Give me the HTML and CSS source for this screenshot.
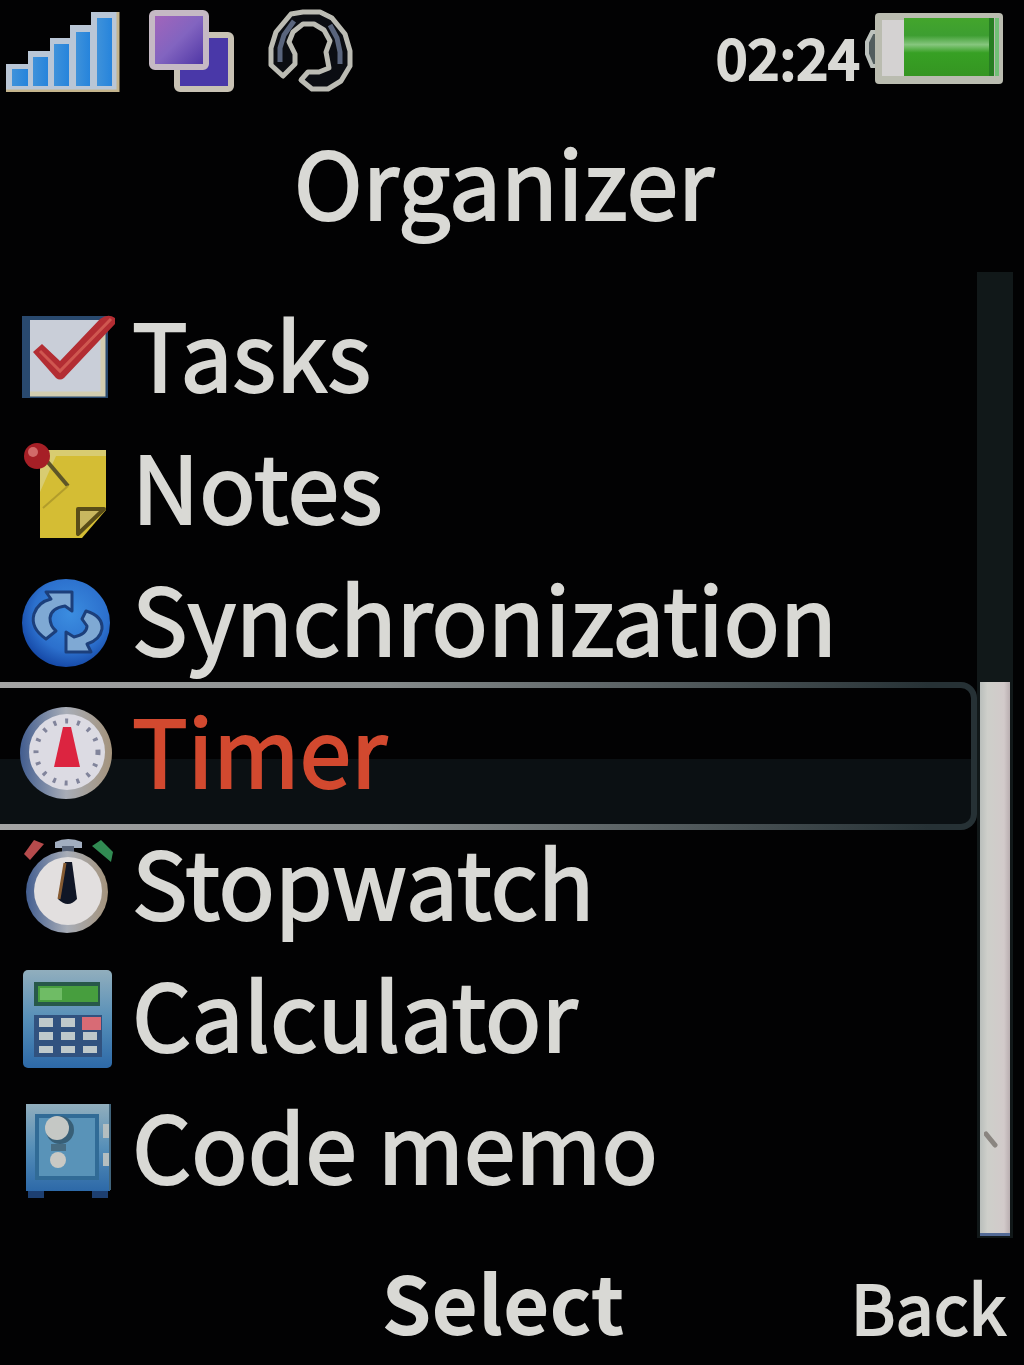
FILE: index.html
```html
<!DOCTYPE html>
<html lang="en">
<head>
<meta charset="utf-8">
<meta name="viewport" content="width=device-width, initial-scale=1">
<title>Organizer</title>
<link rel="stylesheet" href="styles.css">
</head>
<body>
<div class="phone">
  <header class="status">
    <div class="status-group">
      <svg width="120" height="84" viewBox="0 0 120 84" role="img" aria-label="Signal strength">
        <defs>
          <linearGradient id="bar" x1="0" x2="1" y1="0" y2="0"><stop offset="0" stop-color="#3f92da"/><stop offset="1" stop-color="#2684dc"/></linearGradient>
        </defs>
        <path d="M6 56H28V43H50V30H70V17H91V4H118V83H6Z" fill="#b9c6d6"/>
        <path d="M118 4V83H6" fill="none" stroke="#c4b48c" stroke-width="3"/>
        <g fill="url(#bar)"><path d="M12 61h16v17H12z"/><path d="M33 49h15v29H33z"/><path d="M54 36h15v42H54z"/><path d="M76 24h14v54H76z"/><path d="M97 10h15v68H97z"/></g>
      </svg>
      <svg width="90" height="84" viewBox="0 0 90 84" role="img" aria-label="Active connection">
        <defs>
          <linearGradient id="vio" x1="0" x2="1" y1="0" y2="1"><stop offset="0" stop-color="#a565ba"/><stop offset=".5" stop-color="#8264c0"/><stop offset="1" stop-color="#4931a2"/></linearGradient>
        </defs>
        <rect x="29" y="27" width="54" height="54" rx="3" fill="#4938a8" stroke="#c8c2b4" stroke-width="6"/>
        <rect x="4" y="5" width="54" height="54" rx="3" fill="url(#vio)" stroke="#c5b9c4" stroke-width="6"/>
      </svg>
      <svg width="90" height="84" viewBox="0 0 90 84" role="img" aria-label="Handsfree" fill="#0b0d12" stroke="#bcbcb4" stroke-width="5" stroke-linejoin="round">
        <path d="M17 68 5 57V40L10 24 25 6 37 4H54L66 10 79 26 84 43V58L75 73 62 81H46L35 72 42 64H53L63 60 60 44 64 33 58 22 48 16H37L27 24 23 34 29 46V56Z"/>
        <path d="M14 54V40L18 27 28 13M64 17 71 30 74 44V56" fill="none" stroke="#59647c" stroke-width="5"/>
      </svg>
    </div>
    <div class="status-group status-right">
      <time class="clock">02:24</time>
      <svg width="140" height="84" viewBox="0 0 140 84" role="img" aria-label="Battery full">
        <defs>
          <linearGradient id="cell" x1="0" x2="0" y1="0" y2="1"><stop offset="0" stop-color="#43a52c"/><stop offset=".3" stop-color="#3d9e31"/><stop offset=".46" stop-color="#86c67e"/><stop offset=".6" stop-color="#37a024"/><stop offset="1" stop-color="#359522"/></linearGradient>
        </defs>
        <path d="M16 24H8L3 34V46L8 58H16" fill="#525d5e" stroke="#bcc2bd" stroke-width="4"/>
        <rect x="11" y="5" width="128" height="71" rx="4" fill="#babcb0"/>
        <rect x="18" y="12" width="22" height="56" fill="#d4d2d2"/>
        <rect x="40" y="10" width="90" height="58" fill="url(#cell)"/>
        <path d="M125 10h5v58h-5z" fill="#267d22"/><path d="M131 10h4v58h-4z" fill="#70bf76"/>
      </svg>
    </div>
  </header>

  <h1 class="title">Organizer</h1>

  <main class="content">
    <ul class="menu">
      <li><a class="item" href="#tasks">
        <svg class="icon" viewBox="0 0 100 100" aria-hidden="true">
          <path d="M2 6H88V88H2Z" fill="#29496e"/><path d="M10 10H85V86H10Z" fill="#c9ced8"/><path d="M83 10V84H10" fill="none" stroke="#d3cdb0" stroke-width="5"/>
          <path d="M13 42 22 34 40 51 80 9Q88 3 95 8V14L44 68Q40 71 36 68Z" fill="#b32d33"/><path d="M20 41 40 61 91 9" fill="none" stroke="#cf5750" stroke-width="3"/>
        </svg>Tasks</a></li>
      <li><a class="item" href="#notes">
        <svg class="icon" viewBox="0 0 100 100" aria-hidden="true">
          <path d="M20 8H86V68L62 96H20Z" fill="#d4bd34"/><path d="M20 8H86V14H36L20 50Z" fill="#d8cc71"/>
          <path d="M58 92V67H84Z" fill="#c8b760" stroke="#594d18" stroke-width="4" stroke-linejoin="round"/>
          <path d="M26 18 48 44" stroke="#5d5528" stroke-width="4"/><path d="M48 44 23 66" stroke="#b29d2b" stroke-width="2"/>
          <circle cx="17" cy="14" r="13" fill="#a61f26"/><circle cx="13" cy="10" r="5" fill="#d26a69"/>
        </svg>Notes</a></li>
      <li><a class="item" href="#synchronization">
        <svg class="icon" viewBox="0 0 100 100" aria-hidden="true">
          <defs><radialGradient id="orb" cx=".55" cy=".4" r=".6"><stop offset="0" stop-color="#3b8de0"/><stop offset=".7" stop-color="#2c70cd"/><stop offset="1" stop-color="#174ba9"/></radialGradient></defs>
          <circle cx="46" cy="49" r="44" fill="url(#orb)"/>
          <g fill="#7fa9d4" stroke="#1c3f7b" stroke-width="3" stroke-linejoin="round">
            <path d="M26 65Q10 54 14 40 18 28 31 25L26 18H52V37L45 32Q31 34 30 44 30 52 36 57Z"/>
            <path d="M66 37Q83 42 82 55 80 66 67 70L71 78H46V58L54 63Q67 60 67 52L62 45Z"/>
          </g>
        </svg>Synchronization</a></li>
      <li><a class="item selected" href="#timer" aria-current="true">
        <svg class="icon" viewBox="0 0 100 100" aria-hidden="true">
          <defs><linearGradient id="rim" x1="0" x2="1" y1="0" y2="0"><stop offset="0" stop-color="#425d8f"/><stop offset=".5" stop-color="#a8adb7"/><stop offset="1" stop-color="#a4937c"/></linearGradient></defs>
          <circle cx="46" cy="47" r="46" fill="url(#rim)"/><circle cx="47" cy="46" r="38" fill="#dcdbe3"/>
          <circle cx="47" cy="46" r="31" fill="none" stroke="#81849b" stroke-width="5" stroke-dasharray="3 9"/>
          <path d="M43 21H51L60 61H34Z" fill="#dc2440"/>
        </svg>Timer</a></li>
      <li><a class="item" href="#stopwatch">
        <svg class="icon" viewBox="0 0 100 100" aria-hidden="true">
          <path d="M4 16 14 2 24 6 10 22Z" fill="#b54b4c"/><path d="M72 8 81 2 93 14 91 24Z" fill="#318b53"/>
          <path d="M35 4Q48-2 62 4V10H35Z" fill="#a2aec0"/><path d="M42 8h12v8H42z" fill="#59657a"/>
          <circle cx="47" cy="54" r="41" fill="url(#rim)"/><circle cx="48" cy="53" r="34" fill="#e2dfdf"/>
          <path d="M45 24H52L57 61Q48 71 38 61Z" fill="#101626"/><path d="M45 25 39 61" stroke="#865b32" stroke-width="3"/>
        </svg>Stopwatch</a></li>
      <li><a class="item" href="#calculator">
        <svg class="icon" viewBox="0 0 100 100" aria-hidden="true">
          <defs><linearGradient id="shell" x1="0" x2="0" y1="0" y2="1"><stop offset="0" stop-color="#91aebd"/><stop offset=".5" stop-color="#568fb8"/><stop offset="1" stop-color="#2d69a8"/></linearGradient></defs>
          <rect x="3" width="89" height="98" rx="5" fill="url(#shell)"/>
          <path d="M14 12H80V36H14Z" fill="#275849"/><path d="M18 16H78V32H18Z" fill="#479e3e"/><path d="M20 18H42V30H20Z" fill="#6fbc65"/>
          <path d="M14 45H82V87H14Z" fill="#31527f"/>
          <g fill="#bfc9cb"><path d="M19 48h14v9H19zM41 48h14v9H41zM19 62h14v8H19zM41 62h14v8H41zM63 62h14v8H63zM19 76h14v7H19zM41 76h14v7H41zM63 76h14v7H63z"/></g>
          <path d="M62 47H81V60H62Z" fill="#d86b75"/>
        </svg>Calculator</a></li>
      <li><a class="item" href="#code-memo">
        <svg class="icon" viewBox="0 0 100 100" aria-hidden="true">
          <path d="M8 84H24V96H8ZM72 84H88V96H72Z" fill="#1d3f71"/>
          <path d="M6 2H90V89H6Z" fill="url(#shell)"/><path d="M17 14H77V76H17Z" fill="#5993b8" stroke="#316b96" stroke-width="4"/>
          <path d="M83 22h7v14h-7zM83 51h7v13h-7z" fill="#b4bec0"/><path d="M90 2V88" stroke="#40647b" stroke-width="2"/>
          <circle cx="40" cy="28" r="14" fill="#385f77"/><circle cx="37" cy="26" r="12" fill="#c5c8c5"/>
          <path d="M31 42H46V49H31Z" fill="#476c82"/><circle cx="38" cy="58" r="8" fill="#c9c9c4"/>
        </svg>Code memo</a></li>
    </ul>
    <div class="track">
      <div class="thumb">
        <svg width="14" height="18" viewBox="0 0 14 18" aria-hidden="true"><path d="M2 3 11 14" stroke="#8a8580" stroke-width="5" stroke-linecap="round"/></svg>
      </div>
    </div>
  </main>

  <footer class="softkeys">
    <span></span>
    <button class="key key-main" type="button">Select</button>
    <button class="key key-side" type="button">Back</button>
  </footer>
</div>
</body>
</html>
```
FILE: styles.css
```css
* { box-sizing: border-box; }

body {
  margin: 0;
  background: #020203;
  color: #d9d9d5;
  font-family: "Noto Sans CJK SC", "Open Sans", sans-serif;
}

.phone {
  min-height: 100vh;
  display: flex;
  flex-direction: column;
}

svg { display: block; flex: none; }

.status {
  display: flex;
  justify-content: space-between;
  padding: 8px 20px 16px 0;
}

.status-group { display: flex; gap: 28px; }
.status-right { gap: 4px; }

.clock {
  font-size: 56px;
  font-weight: 500;
  line-height: 96px;
  height: 84px;
  -webkit-text-stroke: 2px;
}

.title {
  margin: 0;
  padding: 0 16px 20px 0;
  font-size: 93px;
  font-weight: 400;
  line-height: 144px;
  text-align: center;
  -webkit-text-stroke: 2px;
}

.content {
  display: flex;
  padding-right: 11px;
}

.menu {
  flex: 1;
  margin: 0;
  padding: 22px 0 20px;
  list-style: none;
}

.item {
  display: flex;
  gap: 12px;
  height: 132px;
  padding-left: 20px;
  color: inherit;
  font-size: 93px;
  line-height: 116px;
  text-decoration: none;
  white-space: nowrap;
  -webkit-text-stroke: 2px;
}

.icon {
  width: 100px;
  height: 100px;
  margin-top: 16px;
}

/* The highlight frame runs off the left edge and fades to the right. */
.selected {
  height: 148px;
  margin: -8px 0;
  padding-top: 2px;
  color: #d2492f;
  border: 6px solid transparent;
  border-left: 0;
  border-radius: 0 16px 16px 0;
  background:
    linear-gradient(#020203 52%, #0b1013 52%) padding-box,
    linear-gradient(90deg, #a5a5a5, #858a8b 40%, #263135 95%) border-box;
}

.track {
  width: 36px;
  padding: 410px 3px 2px;
  background: #111819;
  display: flex;
}

.thumb {
  flex: 1;
  display: flex;
  flex-direction: column;
  justify-content: flex-end;
  padding: 0 0 84px 4px;
  background: linear-gradient(90deg, #b9bebb, #cecfca 25%, #d2caca 80%, #b9aeb0);
  border-bottom: 3px solid #536a96;
}

.softkeys {
  display: grid;
  grid-template-columns: 1fr auto 1fr;
  align-items: baseline;
  padding-right: 18px;
}

.key {
  padding: 0;
  border: 0;
  background: none;
  color: inherit;
  font-family: inherit;
  line-height: 124px;
}

.key-main { font-size: 80px; font-weight: 700; }
.key-side {
  font-size: 68px;
  justify-self: end;
  -webkit-text-stroke: 2px;
}
```
